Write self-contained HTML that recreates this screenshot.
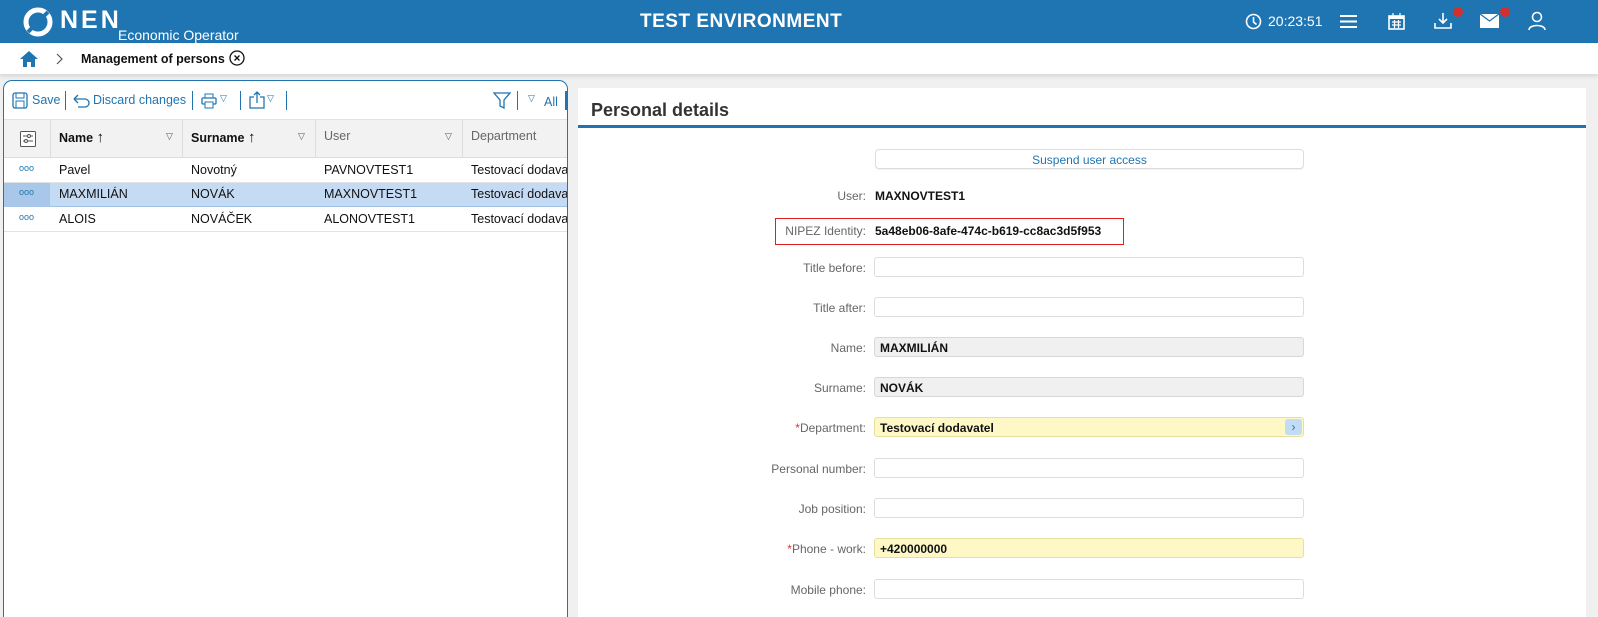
<!DOCTYPE html>
<html style="width:1598px;height:617px;overflow:hidden"><head><meta charset="utf-8"><style>
*{box-sizing:border-box;margin:0;padding:0}
body{width:1598px;height:617px;overflow:hidden;background:#f0f0f0;font-family:"Liberation Sans",Arial,sans-serif;font-size:13px;color:#111;position:relative}
.a{position:absolute}
.hdr{left:0;top:0;width:1598px;height:43px;background:#1f75b2;color:#fff}
.bc{left:0;top:43px;width:1598px;height:31px;background:#fff;box-shadow:0 2px 4px rgba(0,0,0,.12)}
.lp{left:3px;top:80px;width:565px;height:537px;background:#fff;border:1px solid #1f75b2;border-bottom:none;border-radius:9px 9px 0 0;overflow:hidden}
.rp{left:578px;top:88px;width:1008px;height:529px;background:#fff}
.lbl{width:200px;text-align:right;color:#666;font-size:12px}
.inp{left:874px;width:430px;height:20px;border:1px solid #ddd;border-radius:3px;background:#fff;font-weight:bold;font-size:12px;padding:3px 5px}
.gr{background:#f0f0f0;border-color:#d8d8d8}
.yl{background:#fdf8c6;border-color:#e8df9c}
.req{color:#d33}
.cell{position:absolute;font-size:12.5px}
</style></head><body>
<div class="a hdr">
 <svg class="a" style="left:22px;top:6px" width="32" height="32" viewBox="0 0 32 32"><circle cx="16" cy="16" r="12" fill="none" stroke="#fff" stroke-width="5"/><path d="M6 26 L26 6" stroke="#1f75b2" stroke-width="4"/></svg>
 <div class="a" style="left:60px;top:6px;font-size:25px;font-weight:bold;letter-spacing:3px">NEN</div>
 <div class="a" style="left:118px;top:27px;font-size:14px">Economic Operator</div>
 <div class="a" style="left:640px;top:11px;font-size:19px;font-weight:bold;letter-spacing:.5px">TEST ENVIRONMENT</div>
 <svg class="a" style="left:1245px;top:13px" width="17" height="17"><circle cx="8.5" cy="8.5" r="7" fill="none" stroke="#fff" stroke-width="1.6"/><path d="M8.5 4v5l3 2.5" stroke="#fff" stroke-width="1.6" fill="none"/></svg>
 <div class="a" style="left:1268px;top:13px;font-size:14px">20:23:51</div>
 <svg class="a" style="left:1340px;top:14px" width="17" height="15"><path d="M0 2h17M0 7.5h17M0 13h17" stroke="#fff" stroke-width="2"/></svg>
 <svg class="a" style="left:1388px;top:13px" width="17" height="17"><rect x="1" y="3" width="15" height="13" fill="none" stroke="#fff" stroke-width="1.6"/><rect x="1" y="3" width="15" height="3" fill="#fff"/><path d="M5 0v4M12 0v4M4 9h9M4 12h9M6.5 7v8M10.5 7v8" stroke="#fff" stroke-width="1.2"/></svg>
 <svg class="a" style="left:1434px;top:12px" width="18" height="18"><path d="M9 1v10M5 7l4 4 4-4M1 11v5h16v-5" stroke="#fff" stroke-width="1.6" fill="none"/></svg>
 <div class="a" style="left:1453px;top:7px;width:10px;height:10px;border-radius:50%;background:#d32f2f"></div>
 <svg class="a" style="left:1480px;top:14px" width="19" height="14"><rect x="0" y="0" width="19" height="14" fill="#fff"/><path d="M0 0l9.5 7L19 0" stroke="#1f75b2" stroke-width="1.3" fill="none"/></svg>
 <div class="a" style="left:1500px;top:7px;width:10px;height:10px;border-radius:50%;background:#d32f2f"></div>
 <svg class="a" style="left:1528px;top:11px" width="18" height="20"><circle cx="9" cy="6" r="4.5" fill="none" stroke="#fff" stroke-width="1.6"/><path d="M1 19c0-6 16-6 16 0" fill="none" stroke="#fff" stroke-width="1.6"/></svg>
</div>
<div class="a bc">
 <svg class="a" style="left:20px;top:8px" width="18" height="16"><path d="M9 0L0 8h3v8h4v-5h4v5h4V8h3z" fill="#1f75b2"/></svg>
 <svg class="a" style="left:56px;top:10px" width="8" height="12"><path d="M1 1l5 5-5 5" stroke="#555" fill="none" stroke-width="1.2"/></svg>
 <div class="a" style="left:81px;top:9px;font-weight:bold;font-size:12.5px">Management of persons</div>
 <svg class="a" style="left:229px;top:7px" width="16" height="16"><circle cx="8" cy="8" r="7" fill="none" stroke="#111" stroke-width="1.3"/><path d="M5.5 5.5l5 5M10.5 5.5l-5 5" stroke="#111" stroke-width="1.3"/></svg>
</div>
<div class="a lp">
 <div class="a" style="left:0;top:9px;width:565px;height:22px;color:#1f75b2;font-size:12.5px">
  <svg class="a" style="left:8px;top:2px" width="16" height="17"><rect x="1" y="1" width="14" height="15" rx="2" fill="none" stroke="#1f75b2" stroke-width="1.3"/><rect x="4" y="1" width="8" height="5" fill="none" stroke="#1f75b2"/><rect x="4" y="9" width="8" height="7" fill="none" stroke="#1f75b2"/></svg>
  <span class="a" style="left:28px;top:3px">Save</span>
  <div class="a" style="left:61px;top:1px;width:1px;height:19px;background:#1f75b2"></div>
  <svg class="a" style="left:68px;top:4px" width="18" height="14"><path d="M2 5h11a4 4 0 010 8H6M2 5l4-4M2 5l4 4" fill="none" stroke="#1f75b2" stroke-width="1.3"/></svg>
  <span class="a" style="left:89px;top:3px">Discard changes</span>
  <div class="a" style="left:188px;top:1px;width:1px;height:19px;background:#1f75b2"></div>
  <svg class="a" style="left:197px;top:3px" width="16" height="16"><rect x="4" y="1" width="8" height="4" fill="none" stroke="#1f75b2"/><rect x="1" y="5" width="14" height="6" rx="1" fill="none" stroke="#1f75b2" stroke-width="1.3"/><rect x="4" y="9" width="8" height="6" fill="#fff" stroke="#1f75b2"/></svg>
  <span class="a" style="left:216px;top:3px;font-size:9px">▽</span>
  <div class="a" style="left:236px;top:1px;width:1px;height:19px;background:#1f75b2"></div>
  <svg class="a" style="left:245px;top:1px" width="16" height="18"><path d="M5 6H1v11h14V6h-4M8 12V1M5 4l3-3 3 3" fill="none" stroke="#1f75b2" stroke-width="1.3"/></svg>
  <span class="a" style="left:263px;top:3px;font-size:9px">▽</span>
  <div class="a" style="left:282px;top:1px;width:1px;height:19px;background:#1f75b2"></div>
  <svg class="a" style="left:489px;top:2px" width="18" height="17"><path d="M1 1h16l-6 7v8l-4-2V8z" fill="none" stroke="#1f75b2" stroke-width="1.3"/></svg>
  <div class="a" style="left:513px;top:1px;width:1px;height:19px;background:#1f75b2"></div>
  <span class="a" style="left:524px;top:3px;font-size:9px">▽</span>
  <span class="a" style="left:540px;top:5px">All</span>
  <div class="a" style="left:561px;top:1px;width:2px;height:19px;background:#1f75b2"></div>
 </div>
 <div class="a" style="left:0;top:38px;width:565px;height:39px;background:#f2f2f2;border-top:1px solid #e2e2e2;border-bottom:1px solid #ddd"></div>
 <div class="a" style="left:46px;top:38px;width:1px;height:39px;background:#ddd"></div>
 <div class="a" style="left:178px;top:38px;width:1px;height:39px;background:#ddd"></div>
 <div class="a" style="left:311px;top:38px;width:1px;height:39px;background:#ddd"></div>
 <div class="a" style="left:458px;top:38px;width:1px;height:39px;background:#ddd"></div>
 <svg class="a" style="left:16px;top:50px" width="16" height="16"><rect x=".5" y=".5" width="15" height="15" rx="1" fill="#fff" stroke="#555"/><path d="M3 5h10M3 10h10" stroke="#555"/><circle cx="9" cy="5" r="1.5" fill="#fff" stroke="#555"/><circle cx="6" cy="10" r="1.5" fill="#fff" stroke="#555"/></svg>
 <div class="cell" style="left:55px;top:48px;font-weight:bold">Name <span style="font-weight:normal;font-size:15px">↑</span></div>
 <div class="cell" style="left:162px;top:50px;font-size:9px;color:#555">▽</div>
 <div class="cell" style="left:187px;top:48px;font-weight:bold">Surname <span style="font-weight:normal;font-size:15px">↑</span></div>
 <div class="cell" style="left:294px;top:50px;font-size:9px;color:#555">▽</div>
 <div class="cell" style="left:320px;top:48px;color:#666">User</div>
 <div class="cell" style="left:441px;top:50px;font-size:9px;color:#555">▽</div>
 <div class="cell" style="left:467px;top:48px;color:#666">Department</div>
 <div class="a" style="left:0;top:101px;width:565px;height:25px;background:#c5dbf3;border-top:1px solid #9fc1e6;border-bottom:1px solid #9fc1e6"></div>
 <div class="a" style="left:0;top:101px;width:46px;height:25px;background:#a9c7e8"></div>
 <div class="a" style="left:0;top:101px;width:565px;height:1px;background:#e3e3e3"></div>
 <div class="a" style="left:0;top:150px;width:565px;height:1px;background:#e3e3e3"></div>
 <div class="cell" style="left:15px;top:82px;color:#1f75b2;font-size:9px">ooo</div>
 <div class="cell" style="left:55px;top:82px">Pavel</div><div class="cell" style="left:187px;top:82px">Novotný</div><div class="cell" style="left:320px;top:82px">PAVNOVTEST1</div><div class="cell" style="left:467px;top:82px;white-space:nowrap">Testovací dodavatel</div>
 <div class="cell" style="left:15px;top:106px;color:#1f75b2;font-size:9px">ooo</div>
 <div class="cell" style="left:55px;top:106px">MAXMILIÁN</div><div class="cell" style="left:187px;top:106px">NOVÁK</div><div class="cell" style="left:320px;top:106px">MAXNOVTEST1</div><div class="cell" style="left:467px;top:106px;white-space:nowrap">Testovací dodavatel</div>
 <div class="cell" style="left:15px;top:131px;color:#1f75b2;font-size:9px">ooo</div>
 <div class="cell" style="left:55px;top:131px">ALOIS</div><div class="cell" style="left:187px;top:131px">NOVÁČEK</div><div class="cell" style="left:320px;top:131px">ALONOVTEST1</div><div class="cell" style="left:467px;top:131px;white-space:nowrap">Testovací dodavatel</div>
</div>
<div class="a rp">
 <div class="a" style="left:13px;top:12px;font-size:18px;font-weight:bold;color:#333">Personal details</div>
 <div class="a" style="left:0;top:37px;width:1008px;height:3px;background:#1f75b2"></div>
</div>
<div class="a" style="left:875px;top:149px;width:429px;height:20px;border:1px solid #ddd;border-radius:4px;background:#fff;color:#1f75b2;text-align:center;font-size:12px;padding-top:3px;box-shadow:0 1px 1px rgba(0,0,0,.06)">Suspend user access</div>
<div class="a lbl" style="left:666px;top:189px">User:</div>
<div class="a" style="left:875px;top:189px;font-weight:bold;font-size:12px">MAXNOVTEST1</div>
<div class="a" style="left:775px;top:218px;width:349px;height:27px;border:1px solid #e02020"></div>
<div class="a lbl" style="left:666px;top:224px">NIPEZ Identity:</div>
<div class="a" style="left:875px;top:224px;font-weight:bold;font-size:12px">5a48eb06-8afe-474c-b619-cc8ac3d5f953</div>
<div class="a lbl" style="left:666px;top:261px">Title before:</div><div class="a inp" style="top:257px"></div>
<div class="a lbl" style="left:666px;top:301px">Title after:</div><div class="a inp" style="top:297px"></div>
<div class="a lbl" style="left:666px;top:341px">Name:</div><div class="a inp gr" style="top:337px">MAXMILIÁN</div>
<div class="a lbl" style="left:666px;top:381px">Surname:</div><div class="a inp gr" style="top:377px">NOVÁK</div>
<div class="a lbl" style="left:666px;top:421px"><span class="req">*</span>Department:</div><div class="a inp yl" style="top:417px">Testovací dodavatel</div>
<div class="a" style="left:1285px;top:419px;width:17px;height:16px;background:#c3dcf5;border-radius:3px;color:#1f75b2;font-size:12px;text-align:center;line-height:16px">›</div>
<div class="a lbl" style="left:666px;top:462px">Personal number:</div><div class="a inp" style="top:458px"></div>
<div class="a lbl" style="left:666px;top:502px">Job position:</div><div class="a inp" style="top:498px"></div>
<div class="a lbl" style="left:666px;top:542px"><span class="req">*</span>Phone - work:</div><div class="a inp yl" style="top:538px">+420000000</div>
<div class="a lbl" style="left:666px;top:583px">Mobile phone:</div><div class="a inp" style="top:579px"></div>
</body></html>
